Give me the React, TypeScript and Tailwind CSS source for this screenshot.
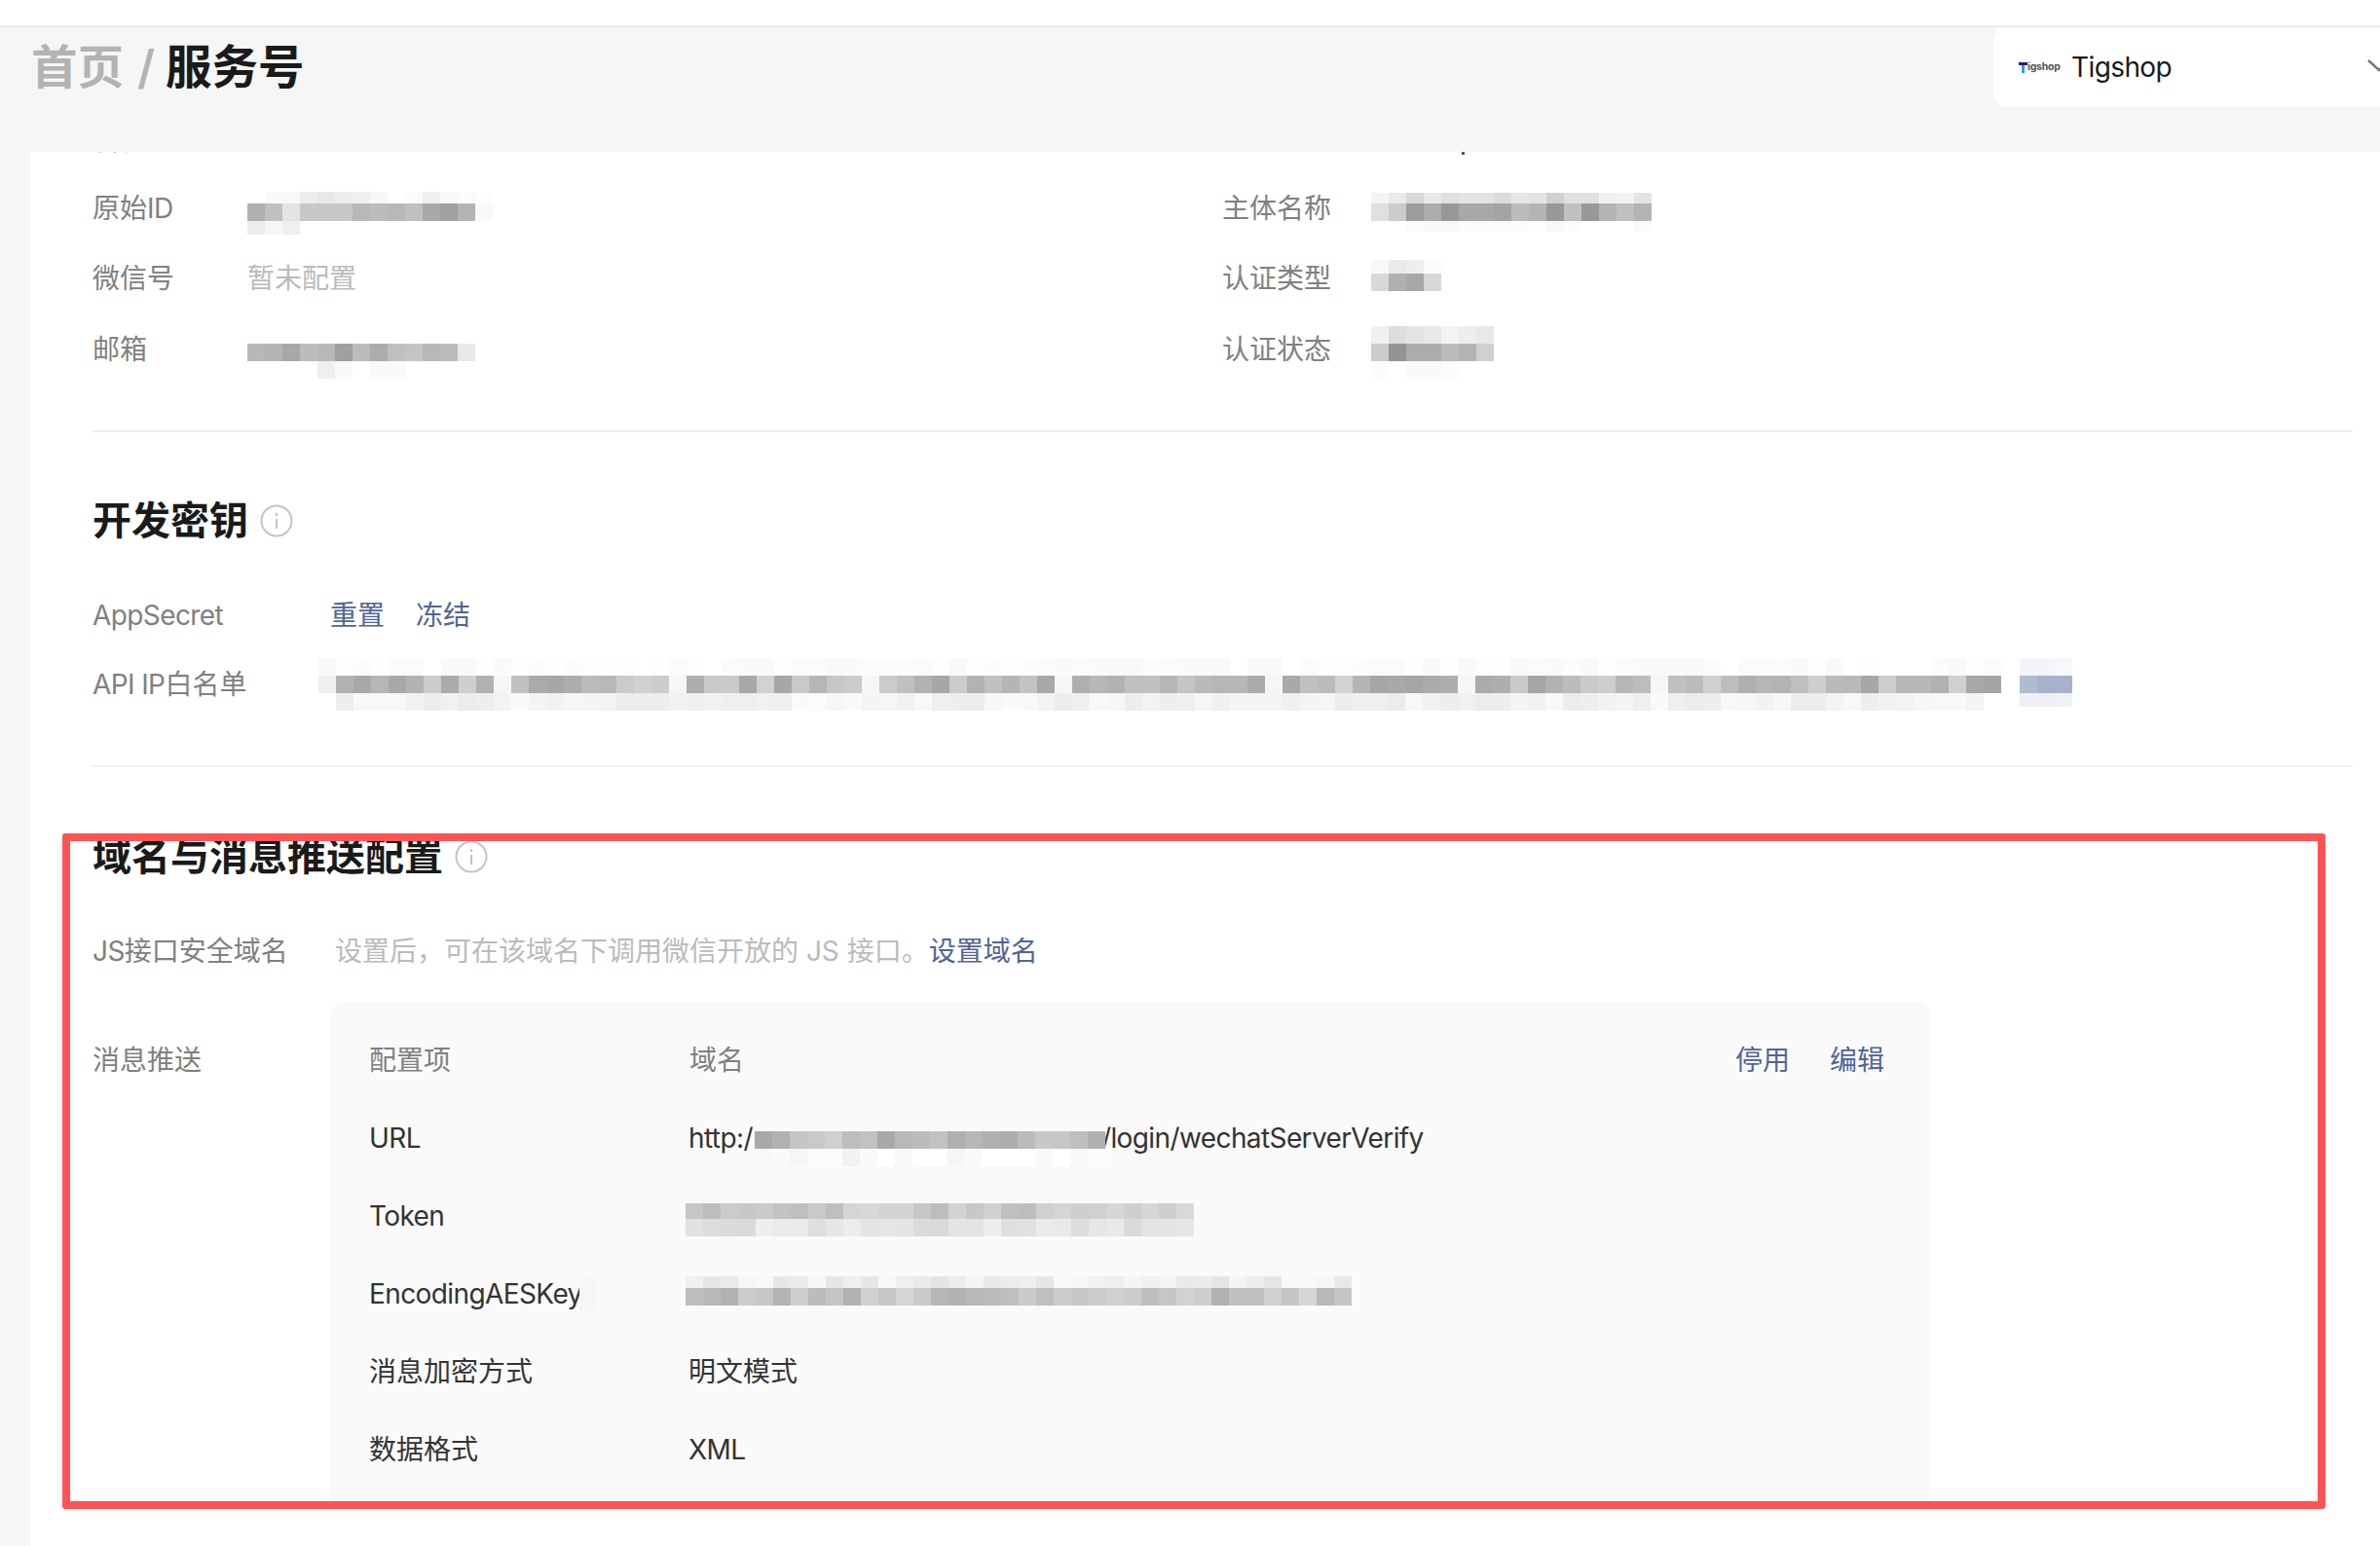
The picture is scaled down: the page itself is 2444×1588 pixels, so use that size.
import type { ReactNode } from "react"

// grey / tinted pixel blocks that cover the redacted values
type MosaicRow = { h: number; cells: (string | null)[] }

const hex = (s: string) => s.split(" ").map((t) => (t === "--" ? null : `#${t}${t}${t}`))

// repeatable noise so the long strips don't need every cell typed out
const noise = (n: number, seed: number, lo: number, hi: number, gaps: number[] = []) =>
  Array.from({ length: n }, (_, i) => {
    if (gaps.includes(i)) return "#f6f6f6"
    const r = Math.abs(Math.sin((i + 1) * 12.9898 + seed * 78.233) * 43758.5453) % 1
    const v = Math.round(lo + (hi - lo) * r).toString(16).padStart(2, "0")
    return `#${v}${v}${v}`
  })

const Mosaic = ({ rows, className = "" }: { rows: MosaicRow[]; className?: string }) => (
  <div className={`absolute flex flex-col pointer-events-none ${className}`}>
    {rows.map((row, i) => (
      <div key={i} className="flex">
        {row.cells.map((c, j) => (
          <div key={j} className="w-[18px] shrink-0" style={{ height: row.h, background: c ?? "transparent" }} />
        ))}
      </div>
    ))}
  </div>
)

const InfoIcon = () => (
  <svg width="34" height="34" viewBox="0 0 34 34" fill="none" className="shrink-0">
    <circle cx="17" cy="17" r="15.5" stroke="#c4c4c4" strokeWidth="2" />
    <circle cx="17" cy="10.5" r="1.4" fill="#c4c4c4" />
    <path d="M17 15v10" stroke="#c4c4c4" strokeWidth="2" />
  </svg>
)

const Label = ({ children, className = "" }: { children: ReactNode; className?: string }) => (
  <span className={`text-[28px] leading-[40px] text-[#808080] whitespace-nowrap ${className}`}>{children}</span>
)

// latin runs in the reference sit tighter than Inter's default
const Latin = ({ children, className = "" }: { children: ReactNode; className?: string }) => (
  <span className={`tracking-[-0.6px] ${className}`}>{children}</span>
)

const Link = ({ children }: { children: ReactNode }) => (
  <span className="text-[28px] leading-[40px] text-[#4f6597] whitespace-nowrap">{children}</span>
)

const SectionTitle = ({ children }: { children: ReactNode }) => (
  <div className="flex items-center gap-[12px] h-[60px]">
    <h2 className="text-[40px] leading-[60px] font-bold text-[#1a1a1a] whitespace-nowrap">{children}</h2>
    <InfoIcon />
  </div>
)

const Cell = ({ children }: { children?: ReactNode }) => (
  <div className="relative h-full flex items-center">{children}</div>
)

const PanelRow = ({ label, children }: { label: ReactNode; children?: ReactNode }) => (
  <div className="relative flex items-center h-[80px] text-[28px] leading-[40px] text-[#333333] whitespace-nowrap">
    <div className="w-[328px] shrink-0">{label}</div>
    <div className="relative flex-1 flex items-center h-full">{children}</div>
  </div>
)

const apiMain = noise(96, 3, 0xa4, 0xd2, [10, 20, 31, 42, 54, 65, 76])
const apiBottom = noise(95, 5, 0xec, 0xfb)
const apiTop = noise(96, 7, 0xf9, 0xff)
apiMain[0] = "#f0f0f0"
apiBottom[0] = "#ffffff"

const watermarkRows = Array.from({ length: 17 })
const watermarkCols = Array.from({ length: 6 })

export default function App() {
  return (
    <div className="relative w-[2444px] h-[1588px] overflow-hidden flex flex-col bg-[#f6f6f6] font-['Inter','Noto_Sans_CJK_SC',sans-serif]">
      <div className="h-[28px] shrink-0 bg-white border-b-2 border-[#ebebeb]" />

      {/* breadcrumb + shop select */}
      <header className="h-[128px] shrink-0 flex justify-between items-start">
        <div className="flex items-center pl-[32px] pt-[14px] text-[47.5px] leading-[54px] whitespace-nowrap">
          <span className="font-semibold text-[#b3b3b3]">首页</span>
          <span className="font-semibold text-[#b3b3b3] ml-[14px] mr-[11px]">/</span>
          <span className="font-bold text-[#1a1a1a]">服务号</span>
        </div>
        <div className="w-[430px] h-[82px] shrink-0 -mr-[33px] bg-white rounded-[14px] flex items-center pl-[26px] pr-[22px]">
          <div className="w-[44px] flex items-center">
            <svg width="9" height="11" viewBox="0 0 9 11" className="shrink-0">
              <path d="M0 0h9v3H0z" fill="#2c1a78" />
              <path d="M3 3h3v8H3z" fill="#2d9bf0" />
            </svg>
            <span className="text-[10.5px] leading-[12px] font-bold text-[#555555] tracking-[-0.2px]">igshop</span>
          </div>
          <Latin className="ml-[10px] text-[28px] leading-[40px] text-[#1a1a1a]">Tigshop</Latin>
          <svg width="24" height="24" viewBox="0 0 24 24" fill="none" className="ml-auto shrink-0">
            <path d="M1 5l11 10 11-10" stroke="#7a7a7a" strokeWidth="2.6" />
          </svg>
        </div>
      </header>

      <main className="flex-1 ml-[31px] bg-white overflow-hidden pl-[64px]">
        {/* basic info, first row is scrolled mostly out of view */}
        <div className="-mt-[51px] grid grid-cols-[159px_1001px_153px_1fr] auto-rows-[72.5px] items-center pr-[28px]">
          <div className="relative h-full translate-y-[3px] flex items-center">
            <Label>名称</Label>
          </div>
          <Cell />
          <Cell />
          <Cell>
            <div className="absolute left-[93px] top-[51px] w-[3px] h-[3px] bg-[#555555]" />
          </Cell>

          <Label>原始<Latin>ID</Latin></Label>
          <Cell>
            <Mosaic
              className="left-0 top-[19px]"
              rows={[
                { h: 12, cells: hex("-- fa f8 ed e8 ed ef f7 -- fb f0 f8 fb fd") },
                { h: 18, cells: hex("b0 c0 e4 c8 c8 c8 b8 bc b8 c0 a8 a0 b4 f9") },
                { h: 14, cells: hex("ec f6 ef") },
              ]}
            />
          </Cell>
          <Label>主体名称</Label>
          <Cell>
            <Mosaic
              className="left-0 top-[20px]"
              rows={[
                { h: 11, cells: hex("f4 ea d8 e8 e0 e4 e4 dc e6 e4 d0 e0 e0 f0 f4 e4") },
                { h: 18, cells: hex("e0 cc 9c ac 98 a8 a8 a4 bc b4 98 c0 98 b4 c0 b4") },
                { h: 11, cells: hex("ff ff fb f9 f8 fb fa fa fc fe f8 fc ff ff ff fa") },
              ]}
            />
          </Cell>

          <Label>微信号</Label>
          <span className="text-[28px] leading-[40px] text-[#bbbbbb]">暂未配置</span>
          <Label>认证类型</Label>
          <Cell>
            <Mosaic
              className="left-0 top-[17px]"
              rows={[
                { h: 14, cells: hex("f8 ea ee fb") },
                { h: 18, cells: hex("d8 b0 a8 d8") },
              ]}
            />
          </Cell>

          <Label>邮箱</Label>
          <Cell>
            <Mosaic
              className="left-0 top-[30px]"
              rows={[
                { h: 18, cells: hex("b8 b4 a8 bc b8 a0 bc ac c0 c4 b8 bc e8") },
                { h: 18, cells: hex("-- -- -- -- ef f9 ff f9 fa") },
              ]}
            />
          </Cell>
          <Label>认证状态</Label>
          <Cell>
            <Mosaic
              className="left-0 top-[12px]"
              rows={[
                { h: 18, cells: hex("f0 dc e4 e8 f4 ee e8") },
                { h: 18, cells: hex("cc 94 ac ac bc b4 d0") },
                { h: 18, cells: hex("fc ff fa fa fc") },
              ]}
            />
          </Cell>
        </div>

        <div className="mr-[28px] mt-[47px] h-[2px] bg-[#eeeeee]" />

        {/* dev keys */}
        <div className="mt-[61px]">
          <SectionTitle>开发密钥</SectionTitle>
        </div>
        <div className="mt-[47px] flex items-center h-[40px]">
          <Label className="w-[245px] shrink-0"><Latin>AppSecret</Latin></Label>
          <div className="flex gap-[32px] -ml-[1px]">
            <Link>重置</Link>
            <Link>冻结</Link>
          </div>
        </div>
        <div className="relative mt-[31px] flex items-center h-[40px]">
          <Label className="w-[232px] shrink-0"><Latin>API IP</Latin>白名单</Label>
          <Mosaic
            className="left-[232px] -top-[7px]"
            rows={[
              { h: 18, cells: apiTop },
              { h: 18, cells: apiMain },
              { h: 18, cells: apiBottom },
            ]}
          />
          <Mosaic
            className="left-[1979px] -top-[7px]"
            rows={[
              { h: 18, cells: ["#f4f5fa", "#f4f5fa", "#f7f8fb"] },
              { h: 18, cells: ["#b0bbd3", "#a8b2cc", "#a8b2cc"] },
              { h: 14, cells: ["#eef0f6", "#eef0f6", "#f1f2f7"] },
            ]}
          />
        </div>

        <div className="mr-[28px] mt-[63px] h-[2px] bg-[#eeeeee]" />

        {/* domain + push config */}
        <div className="mt-[62px]">
          <SectionTitle>域名与消息推送配置</SectionTitle>
        </div>
        <div className="mt-[47px] flex items-center h-[40px]">
          <Label className="w-[249px] shrink-0"><Latin>JS</Latin>接口安全域名</Label>
          <span className="text-[28px] leading-[40px] text-[#bbbbbb] whitespace-nowrap">设置后，可在该域名下调用微信开放的 JS 接口。</span>
          <Link>设置域名</Link>
        </div>

        <div className="mt-[32px] flex items-start">
          <div className="w-[245px] shrink-0 pt-[40px]">
            <Label>消息推送</Label>
          </div>
          <div className="w-[1643px] h-[520px] shrink-0 bg-[#fafafa] rounded-t-[14px] pl-[39px] pr-[48px] pt-[20px]">
            <div className="flex items-center h-[80px] text-[28px] leading-[40px] text-[#808080] whitespace-nowrap">
              <div className="w-[329px] shrink-0">配置项</div>
              <div className="flex-1">域名</div>
              <div className="flex gap-[41px]">
                <Link>停用</Link>
                <Link>编辑</Link>
              </div>
            </div>
            <PanelRow label={<Latin>URL</Latin>}>
              <Latin>http:/</Latin>
              <Latin className="ml-[358px]">/login/wechatServerVerify</Latin>
              <Mosaic
                className="left-[68px] top-[33px]"
                rows={[
                  { h: 18, cells: noise(20, 11, 0xa8, 0xd0) },
                  { h: 18, cells: hex("f8 fa f6 fc fc f2 fa ff f8 ff ff f6 fa ff ff ff fa ff f8 fc") },
                ]}
              />
            </PanelRow>
            <PanelRow label={<Latin>Token</Latin>}>
              <Mosaic
                className="-left-[3px] top-[27px]"
                rows={[
                  { h: 16, cells: noise(29, 13, 0xbc, 0xda) },
                  { h: 18, cells: noise(29, 17, 0xda, 0xee) },
                ]}
              />
            </PanelRow>
            <PanelRow
              label={
                <div className="relative">
                  <Latin>EncodingAESKey</Latin>
                  <div className="absolute left-[216px] top-[4px] w-[18px] h-[34px] bg-[#f6f6f6]" />
                </div>
              }
            >
              <Mosaic
                className="-left-[3px] top-[22px]"
                rows={[
                  { h: 12, cells: noise(38, 19, 0xe4, 0xfa) },
                  { h: 18, cells: noise(38, 23, 0xb0, 0xd6) },
                ]}
              />
            </PanelRow>
            <PanelRow label="消息加密方式">明文模式</PanelRow>
            <PanelRow label="数据格式"><Latin>XML</Latin></PanelRow>
          </div>
        </div>
      </main>

      {/* faint account watermark over the page */}
      <div className="absolute inset-0 pointer-events-none overflow-hidden flex flex-col pt-[58px]">
        {watermarkRows.map((_, r) => (
          <div key={r} className="flex h-[91.6px] shrink-0 -ml-[50px]">
            {watermarkCols.map((_, c) => (
              <div key={c} className="w-[432px] shrink-0 text-[30px] leading-[44px] text-black/[0.015]">LUjy18Le592T</div>
            ))}
          </div>
        ))}
      </div>

      {/* red highlight box drawn over the screenshot */}
      <div className="absolute left-[64px] top-[856px] w-[2324px] h-[694px] border-[8px] border-[#ff5353] rounded-[3px] pointer-events-none" />
    </div>
  )
}
